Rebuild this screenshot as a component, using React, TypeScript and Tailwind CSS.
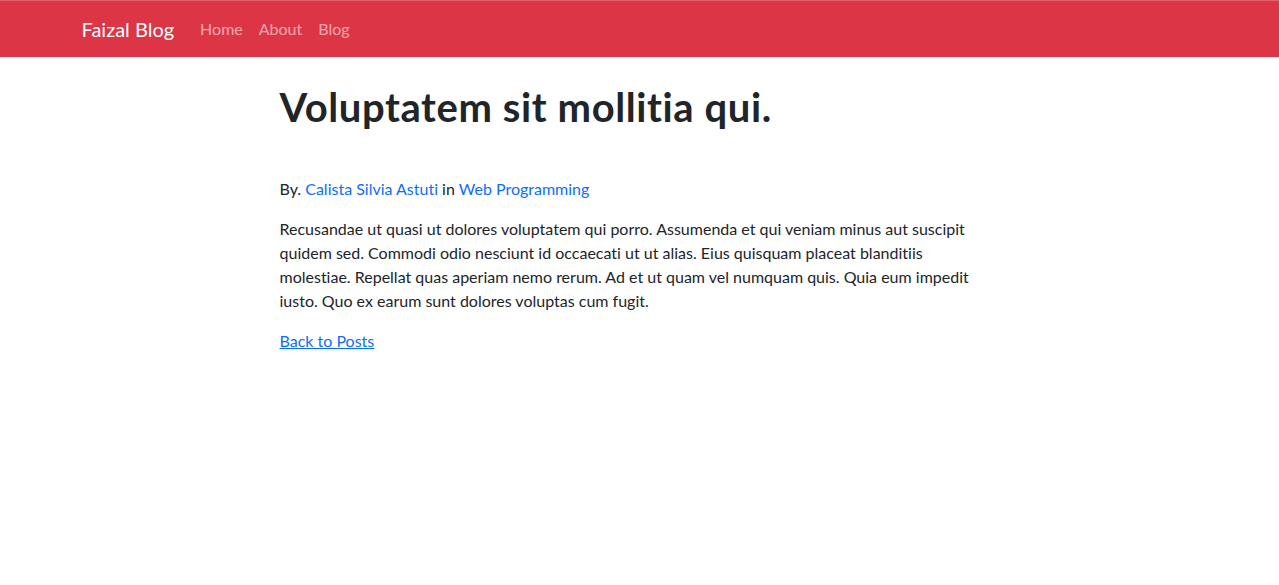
import React from 'react';

const font = { fontFamily: '"Lato", "Noto Sans", sans-serif' };

export default function App() {
  return (
    <div className="min-h-[585px] bg-white text-[#212529] [font-variant-ligatures:none]" style={font}>
      <nav className="h-[57px] border-t border-t-[#e35d6a] bg-[#dc3545]">
        <div className="mx-auto flex h-full w-[1140px] items-center px-3">
          <a href="#" className="mr-[18px] text-[20px] text-white">Faizal Blog</a>
          <div className="flex text-[16px] text-white/55">
            <a href="#" className="px-2">Home</a>
            <a href="#" className="px-2">About</a>
            <a href="#" className="px-2">Blog</a>
          </div>
        </div>
      </nav>

      <main className="mx-auto w-[720px] pt-[26px]">
        <h1 className="mb-[46px] text-[40px] font-bold leading-[1.2] tracking-[0.6px]">Voluptatem sit mollitia qui.</h1>
        <p className="mb-4 text-[16px] leading-6">
          By. <a href="#" className="text-[#0d6efd]">Calista Silvia Astuti</a> in{' '}
          <a href="#" className="text-[#0d6efd]">Web Programming</a>
        </p>
        <p className="mb-4 w-[706px] text-[16px] leading-6">
          Recusandae ut quasi ut dolores voluptatem qui porro. Assumenda et qui veniam minus aut suscipit quidem sed.
          Commodi odio nesciunt id occaecati ut ut alias. Eius quisquam placeat blanditiis molestiae. Repellat quas
          aperiam nemo rerum. Ad et ut quam vel numquam quis. Quia eum impedit iusto. Quo ex earum sunt dolores
          voluptas cum fugit.
        </p>
        <a href="#" className="text-[16px] leading-6 text-[#0d6efd] underline">Back to Posts</a>
      </main>
    </div>
  );
}
